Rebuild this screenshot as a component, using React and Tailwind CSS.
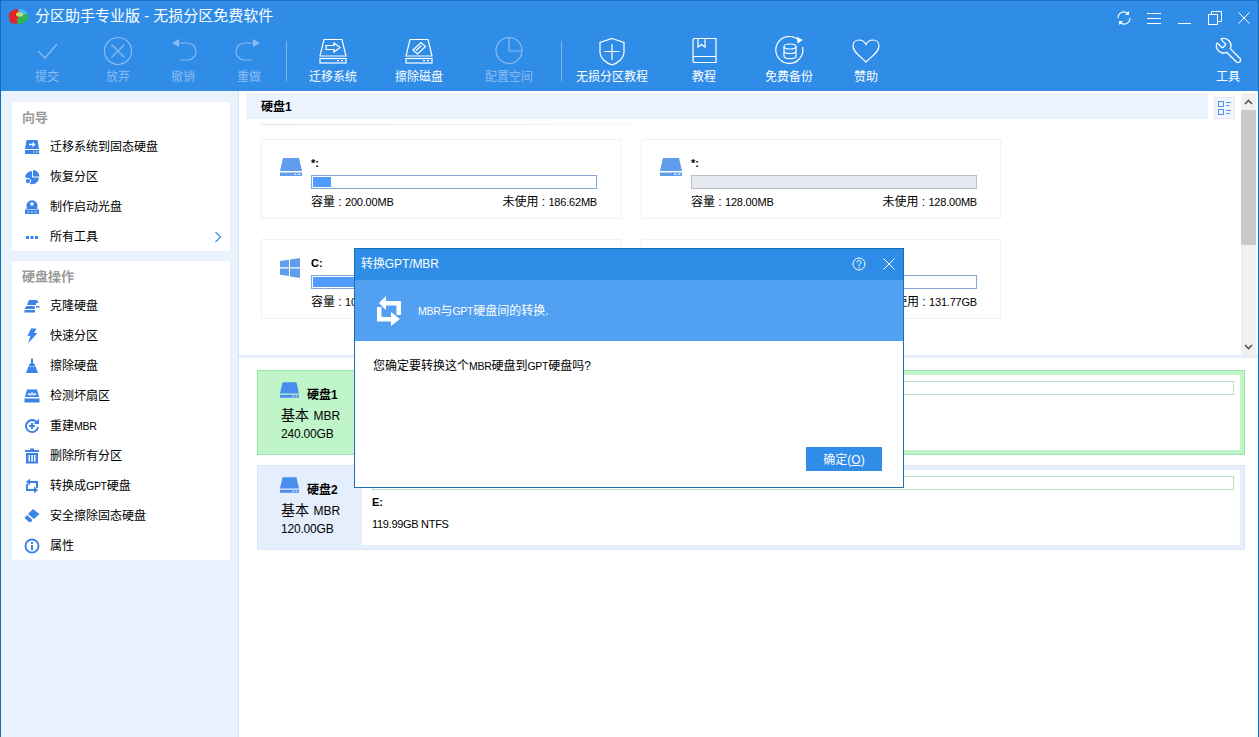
import React from 'react';
import { Wrench } from 'lucide-react';

const FONT = "font-['Liberation_Sans','Noto_Sans_CJK_SC',sans-serif]";

const ToolIcon = ({ name }) => {
  const common = { fill: 'none', stroke: 'currentColor', strokeWidth: 1.2 };
  return (
    <svg width="40" height="32" viewBox="0 0 40 32" {...common}>
      {name === 'check' && <path d="M11 15 L18 22 L30 8" />}
      {name === 'cancel' && (
        <>
          <circle cx="20" cy="15" r="13.5" />
          <path d="M13.5 8.5 L26.5 21.5 M26.5 8.5 L13.5 21.5" />
        </>
      )}
      {name === 'undo' && (
        <>
          <path d="M16 7 H24.5 a8.5 8.5 0 0 1 0 17 H17" />
          <path d="M9 7 L16 3 V11 Z" fill="currentColor" stroke="none" />
        </>
      )}
      {name === 'redo' && (
        <>
          <path d="M24 7 H15.5 a8.5 8.5 0 0 0 0 17 H23" />
          <path d="M31 7 L24 3 V11 Z" fill="currentColor" stroke="none" />
        </>
      )}
      {name === 'migrate' && (
        <>
          <path d="M11 3.5 H29 L33 20 H7 Z" />
          <rect x="7" y="22.5" width="26" height="4.5" />
          <path d="M24 24.7 h2 M28 24.7 h2" />
          <path d="M13 9.5 H21 V7 L27 11.5 L21 16 V13.5 H13 Z" />
        </>
      )}
      {name === 'erase' && (
        <>
          <path d="M11 3.5 H29 L33 20 H7 Z" />
          <rect x="7" y="22.5" width="26" height="4.5" />
          <path d="M24 24.7 h2 M28 24.7 h2" />
          <path d="M14 14 L22 6.5 L26.5 10.5 L18.5 18 Z" />
          <path d="M17 14.5 L22.5 9.5" />
        </>
      )}
      {name === 'pie' && (
        <>
          <circle cx="20" cy="14.5" r="13" />
          <path d="M20 1.5 V15 H32.5" />
        </>
      )}
      {name === 'shield' && (
        <>
          <path d="M20 2.5 L32 6.5 V16 C32 22 26 27 20 29 C14 27 8 22 8 16 V6.5 Z" />
          <path d="M20 8 V24 M12.5 15.5 H27.5" />
        </>
      )}
      {name === 'book' && (
        <>
          <path d="M11 2.5 H32 V26.5 H11 Q9 26.5 9 24.5 V4.5 Q9 2.5 11 2.5 Z" />
          <path d="M14 2.5 V11 L17.5 8.5 L21 11 V2.5" />
          <path d="M9 22 Q9.5 20.5 11 20.5 H32" />
        </>
      )}
      {name === 'backup' && (
        <>
          <path d="M30 4.5 A13.5 13.5 0 1 0 33.5 11" />
          <path d="M28 1 L34 4 L28.5 7.5 Z" fill="currentColor" stroke="none" />
          <ellipse cx="21" cy="10.5" rx="6" ry="2.5" />
          <path d="M15 10.5 V20 C15 23.5 27 23.5 27 20 V10.5 M15 15 C15 18.3 27 18.3 27 15" />
        </>
      )}
      {name === 'heart' && (
        <path d="M20 26 C14 20 7 16 7 10 C7 6 10 4 13 4 C16 4 18.5 5.5 20 8.5 C21.5 5.5 24 4 27 4 C30 4 33 6 33 10 C33 16 26 20 20 26 Z" />
      )}
    </svg>
  );
};

const tools = [
  { label: '提交', icon: 'check', w: 'w-[70px]', dim: true },
  { label: '放弃', icon: 'cancel', w: 'w-[72px]', dim: true },
  { label: '撤销', icon: 'undo', w: 'w-[58px]', dim: true },
  { label: '重做', icon: 'redo', w: 'w-[74px]', dim: true },
  { sep: 'ml-0' },
  { label: '迁移系统', icon: 'migrate', w: 'w-[92px]' },
  { label: '擦除磁盘', icon: 'erase', w: 'w-[80px]' },
  { label: '配置空间', icon: 'pie', w: 'w-[100px]', dim: true },
  { sep: 'ml-[2px]' },
  { label: '无损分区教程', icon: 'shield', w: 'w-[100px]' },
  { label: '教程', icon: 'book', w: 'w-[84px]' },
  { label: '免费备份', icon: 'backup', w: 'w-[86px]' },
  { label: '赞助', icon: 'heart', w: 'w-[68px]' },
];

const SideIcon = ({ name }) => (
  <svg width="16" height="16" viewBox="0 0 16 16" fill="#3a84e8">
    {name === 'migrate' && (
      <>
        <path d="M2.5 1 H13.5 L15 10 H1 Z" />
        <path d="M5 4.7 H8.5 V2.7 L11.5 5.5 L8.5 8.3 V6.3 H5 Z" fill="#fff" />
        <path fillRule="evenodd" d="M1 11 H15 V15 H1 Z M9 12.5 V13.5 H10.5 V12.5 Z M12 12.5 V13.5 H13.5 V12.5 Z" />
      </>
    )}
    {name === 'restore' && (
      <>
        <path d="M9 1 A7 7 0 0 1 15.5 7.5 H9 Z" />
        <path d="M8 2 V8.5 H15 A7 7 0 0 1 6 15 A7 7 0 0 0 1 8 A7 7 0 0 1 8 2 Z" />
        <circle cx="4" cy="12" r="2.6" fill="#3a84e8" stroke="#fff" strokeWidth="1" />
      </>
    )}
    {name === 'boot' && (
      <>
        <path d="M3 9 A5.5 5.5 0 1 1 13 9 L14 10 H2 Z" />
        <circle cx="8" cy="5" r="1.8" fill="#fff" />
        <path fillRule="evenodd" d="M1 10.5 H15 V15 H1 Z M3.5 12.5 V13.5 H5 V12.5 Z M7 12.5 V13.5 H8.8 V12.5 Z M10.8 12.5 V13.5 H12.5 V12.5 Z" />
      </>
    )}
    {name === 'dots' && <path d="M2 7 H5 V10 H2 Z M6.5 7 H9.5 V10 H6.5 Z M11 7 H14 V10 H11 Z" />}
    {name === 'clone' && (
      <>
        <path d="M5 2 H13 L14.5 5 H12 V7 H3 Z" />
        <path d="M2.5 8 H10.5 L11 11 H0.5 Z" />
        <path d="M0.5 12 H11 V14.5 H0.5 Z M12 8 H15.5 V9.5 H12 Z" />
      </>
    )}
    {name === 'flash' && <path d="M7 0.5 H12.5 L10 5 H13.5 L4 15.5 L6.5 8 H3.5 Z" />}
    {name === 'broom' && (
      <>
        <path d="M7 0.5 H9 V5 L11 6.5 V8 H5 V6.5 L7 5 Z" />
        <path d="M4.5 8.5 H11.5 L14 15 H2 Z" />
      </>
    )}
    {name === 'scan' && (
      <>
        <path fillRule="evenodd" d="M3 1.5 H13 L15 9 H1 Z M3 7.5 L5 4.5 L6.5 6.5 L8 3.5 L9.5 6.5 L11 4.5 L13 7.5 L11 6.5 L9.5 8 L8 6 L6.5 8 L5 6.5 Z" />
        <path d="M0.5 10.5 H15.5 V14.5 H0.5 Z" />
      </>
    )}
    {name === 'rebuild' && (
      <>
        <path d="M13 3 A7 7 0 1 0 15 9 H13 A5 5 0 1 1 11.5 4.5 L9.5 6 H15 V0.5 Z" />
        <path d="M5 7 H7 V5 H9 V7 H11 V9 H9 V11 H7 V9 H5 Z" />
      </>
    )}
    {name === 'trash' && (
      <path fillRule="evenodd" d="M6 0.5 H10 V2 H15 V4 H1 V2 H6 Z M2 5 H14 V15.5 H2 Z M4.5 7 V13.5 H6 V7 Z M7.3 7 V13.5 H8.8 V7 Z M10 7 V13.5 H11.5 V7 Z" />
    )}
    {name === 'convert' && (
      <path d="M2 4 L6 0.5 V3 H14 V10 H12 V5 H6 V7.5 Z M2 6 H4 V11 H10 V8.5 L14 12 L10 15.5 V13 H2 Z" />
    )}
    {name === 'eraser' && (
      <>
        <path d="M9 1 L15.5 6 L10 11 L4 6 Z" />
        <path d="M3 7 L8.5 12 L7 14 H5 L0.5 10 Z" />
      </>
    )}
    {name === 'info' && (
      <path fillRule="evenodd" d="M8 0.5 A7.5 7.5 0 1 1 8 15.5 A7.5 7.5 0 1 1 8 0.5 Z M8 2.5 A5.5 5.5 0 1 0 8 13.5 A5.5 5.5 0 1 0 8 2.5 Z M7 4 H9 V6 H7 Z M7 7 H9 V12 H7 Z" />
    )}
  </svg>
);

// narrow latin run inside chinese labels
const Lat = ({ children }) => <span className="text-[10.5px] tracking-[-0.3px]">{children}</span>;

const wizard = [
  { icon: 'migrate', label: '迁移系统到固态硬盘' },
  { icon: 'restore', label: '恢复分区' },
  { icon: 'boot', label: '制作启动光盘' },
  { icon: 'dots', label: '所有工具', arrow: true },
];

const diskOps = [
  { icon: 'clone', label: '克隆硬盘' },
  { icon: 'flash', label: '快速分区' },
  { icon: 'broom', label: '擦除硬盘' },
  { icon: 'scan', label: '检测坏扇区' },
  { icon: 'rebuild', label: <>重建<Lat>MBR</Lat></>, key: 'mbr' },
  { icon: 'trash', label: '删除所有分区' },
  { icon: 'convert', label: <>转换成<Lat>GPT</Lat>硬盘</>, key: 'gpt' },
  { icon: 'eraser', label: '安全擦除固态硬盘' },
  { icon: 'info', label: '属性' },
];

const SideCard = ({ title, items }) => (
  <div className="bg-white">
    <div className="h-[29px] pl-[10px] pt-[2px] flex items-center text-[13px] font-bold text-[#9a9a9a]">{title}</div>
    {items.map((item) => (
      <div key={item.key || item.label} className="h-[30px] pt-[2px] flex items-center pl-[12px] pr-[8px] text-xs text-black">
        <span className="w-[26px] flex"><SideIcon name={item.icon} /></span>
        <span>{item.label}</span>
        {item.arrow && (
          <svg className="ml-auto" width="8" height="12" viewBox="0 0 8 12" fill="none" stroke="#3a8ae8" strokeWidth="1.2">
            <path d="M1.5 1 L6.5 6 L1.5 11" />
          </svg>
        )}
      </div>
    ))}
  </div>
);

const DiskGlyph = ({ w = 22, color = '#619ded' }) => (
  <svg width={w} height={Math.round((w * 18) / 22)} viewBox="0 0 22 18" fill={color}>
    <path d="M3 0 H19 L22 13 H0 Z" />
    <path fillRule="evenodd" d="M0 14.5 H22 V18 H0 Z M14 15.7 V16.8 H16.5 V15.7 Z M18 15.7 V16.8 H20.5 V15.7 Z" />
  </svg>
);

const WinGlyph = () => (
  <svg width="20" height="20" viewBox="0 0 20 20" fill="#619ded">
    <path d="M0 3 L9 1.7 V9.3 H0 Z M10 1.5 L20 0 V9.3 H10 Z M0 10.5 H9 V18 L0 16.8 Z M10 10.5 H20 V20 L10 18.4 Z" />
  </svg>
);

const partitions = [
  { name: '*:', total: '200.00MB', free: '186.62MB', fill: 'w-[18px]', bar: 'border-[#86a8d8]', icon: 'disk' },
  { name: '*:', total: '128.00MB', free: '128.00MB', bar: 'border-[#bcc0ca]', bg: 'bg-[#e8eaf2]', icon: 'disk' },
  { name: 'C:', total: '107.79GB', fill: 'w-[120px]', bar: 'border-[#86a8d8]', icon: 'win' },
  { name: 'D:', total: '132.00GB', free: '131.77GB', fill: 'w-[4px]', bar: 'border-[#86a8d8]', icon: 'disk' },
];

const PartitionCard = ({ p }) => (
  <div className="w-[360px] h-[80px] border border-[#f0f2f5] flex pl-[18px] pr-[23px] pt-[14px]">
    <div className="w-[31px] pt-[4px] shrink-0">
      {p.icon === 'win' ? <WinGlyph /> : <DiskGlyph />}
    </div>
    <div className="flex-1">
      <div className="h-[18px] mb-[3px] flex items-center text-[11px] font-bold text-black">{p.name}</div>
      <div className={`h-[14px] border p-[1px] ${p.bar} ${p.bg || 'bg-white'}`}>
        {p.fill && <div className={`h-full bg-[#4f9bfb] ${p.fill}`} />}
      </div>
      <div className="flex justify-between mt-[5px] text-xs leading-[16px] text-black">
        <span>容量 : <span className="text-[11px] tracking-[-0.2px]">{p.total}</span></span>
        {p.free && <span>未使用 : <span className="text-[11px] tracking-[-0.2px]">{p.free}</span></span>}
      </div>
    </div>
  </div>
);

const DiskRow = ({ title, size, selected, children }) => (
  <div className={`h-[85px] flex border ${selected ? 'bg-[#bff5c8] border-[#9fe3ac]' : 'bg-[#e5eefc] border-[#dce6f5]'}`}>
    <div className="w-[104px] shrink-0 pl-[22px] pt-[10px]">
      <div className="flex items-end gap-[8px] h-[19px]">
        <span className="mb-[2px] flex"><DiskGlyph w={19} color="#4a8dec" /></span>
        <span className="text-xs font-bold text-black leading-[14px] -mb-[2px]">{title}</span>
      </div>
      <div className="ml-px text-black leading-[18px] mt-[5px]">
        <span className="text-sm">基本</span> <span className="text-xs">MBR</span>
      </div>
      <div className="ml-px text-xs tracking-[-0.2px] text-black mt-[1px]">{size}</div>
    </div>
    <div className="flex-1 bg-white my-[4px] mr-[4px] pl-[10px] pr-[6px] pt-[6px]">
      {children}
    </div>
  </div>
);

const PartBar = () => <div className="h-[14px] border border-[#b5e3bf] bg-white" />;

const Dialog = () => (
  <div className="absolute left-[353px] top-[248px] w-[550px] h-[240px] bg-white border border-[#1a6db5] flex flex-col">
    <div className="h-[31px] pb-[1px] bg-[#2e8de6] flex items-center pl-[6px] text-white">
      <span className="text-xs tracking-[-0.1px]">转换GPT/MBR</span>
      <svg className="ml-auto" width="14" height="14" viewBox="0 0 14 14" fill="none" stroke="#fff" strokeWidth="1">
        <circle cx="7" cy="7" r="6" />
        <path d="M5 5.5 a2 2 0 1 1 3 1.7 c-.8 .5 -1 .9 -1 1.8 M7 10 v1.2" />
      </svg>
      <svg className="ml-[17px] mr-[8px]" width="12" height="12" viewBox="0 0 12 12" fill="none" stroke="#fff" strokeWidth="1">
        <path d="M0.5 0.5 L11.5 11.5 M11.5 0.5 L0.5 11.5" />
      </svg>
    </div>
    <div className="h-[61px] bg-[#52a0f2] flex items-center pl-[22px] text-white">
      <svg width="24" height="30" viewBox="0 0 24 30" fill="#fff">
        <path d="M2 7 L9 0 V5 H24 V19 H19.5 V9.5 H9 V14 Z" />
        <path d="M0 11 H4.5 V21 H14 V16 L23 23 L14 30 V25.5 H0 Z" />
      </svg>
      <span className="ml-[17px] text-xs"><Lat>MBR</Lat>与<Lat>GPT</Lat>硬盘间的转换.</span>
    </div>
    <div className="flex-1 flex flex-col pl-[18px] pr-[21px] pt-[17px] pb-[16px]">
      <div className="text-xs leading-[16px] text-black">您确定要转换这个<Lat>MBR</Lat>硬盘到<Lat>GPT</Lat>硬盘吗?</div>
      <button className="mt-auto self-end w-[76px] h-[24px] pt-[1px] bg-[#2f8de8] text-xs text-white">
        确定(<span className="underline">O</span>)
      </button>
    </div>
  </div>
);

export default function App() {
  return (
    <div className={`${FONT} relative w-full h-screen overflow-hidden bg-white border-x border-[#0f6cb8] flex flex-col`}>
      {/* title + toolbar */}
      <div className="h-[91px] shrink-0 bg-[#2f8de8] border-t border-[#1873c7] text-white">
        <div className="h-[31px] mb-[4px] flex items-center pl-[7px]">
          <svg width="21" height="17" viewBox="0 0 21 17">
            <path d="M1 6 C2 3 6 1 10 1 L11 8 L9 16 L3 15 C1 12 0.5 9 1 6 Z" fill="#e0252c" />
            <path d="M10 1 C14 0.5 18 2 20 6 L12 8 Z" fill="#4fb4ee" />
            <path d="M12 8 L20 6 C21 10 19 13 17 14 L10 17 L9 12 Z" fill="#2fb54e" />
            <ellipse cx="11.5" cy="6.5" rx="3.5" ry="2.2" fill="#b6e86a" />
          </svg>
          <span className="ml-[6px] text-[15px]">分区助手专业版 - 无损分区免费软件</span>
          <div className="ml-auto flex items-center mt-[2px] mr-[8px]">
            <svg width="16" height="16" viewBox="0 0 16 16" fill="none" stroke="#fff" strokeWidth="1.1">
              <path d="M2 8 A6 6 0 0 1 12 3.5 M14 8 A6 6 0 0 1 4 12.5" />
              <path d="M13 1 V5 H9 Z M3 15 V11 H7 Z" fill="#fff" stroke="none" />
            </svg>
            <svg className="ml-[15px]" width="14" height="14" viewBox="0 0 14 14" stroke="#fff" strokeWidth="1">
              <path d="M0 2.5 H14 M0 7.5 H14 M0 12.5 H14" />
            </svg>
            <svg className="ml-[17px]" width="14" height="14" viewBox="0 0 14 14" stroke="#fff" strokeWidth="1">
              <path d="M0 12.5 H13" />
            </svg>
            <svg className="ml-[16px]" width="14" height="14" viewBox="0 0 14 14" fill="none" stroke="#fff" strokeWidth="1">
              <rect x="0.5" y="3.5" width="9" height="10" />
              <path d="M3.5 3.5 V0.5 H13.5 V10.5 H9.5" />
            </svg>
            <svg className="ml-[16px]" width="12" height="12" viewBox="0 0 12 12" stroke="#fff" strokeWidth="1">
              <path d="M0.5 0.5 L11.5 11.5 M11.5 0.5 L0.5 11.5" />
            </svg>
          </div>
        </div>
        <div className="flex items-start pl-[11px]">
          {tools.map((t, i) =>
            t.sep ? (
              <div key={i} className={`w-px h-[40px] mt-[5px] bg-[#7fb6ee] shrink-0 ${t.sep}`} />
            ) : (
              <div key={t.label} className={`${t.w} shrink-0 flex flex-col items-center ${t.dim ? 'text-[#8cbcf1]' : 'text-white'}`}>
                <ToolIcon name={t.icon} />
                <span className="text-xs leading-[16px] mt-[1px]">{t.label}</span>
              </div>
            )
          )}
          <div className="ml-auto w-[60px] flex flex-col items-center">
            <div className="h-[32px]">
              <Wrench className="-scale-x-100" size={29} strokeWidth={1.1} />
            </div>
            <span className="text-xs leading-[16px] mt-[1px]">工具</span>
          </div>
        </div>
      </div>

      <div className="flex-1 flex min-h-0">
        {/* sidebar */}
        <div className="w-[238px] shrink-0 bg-[#eaf2fd] border-r border-[#d8e2ee] pl-[11px] pr-[8px] pt-[11px] flex flex-col gap-[10px]">
          <SideCard title="向导" items={wizard} />
          <SideCard title="硬盘操作" items={diskOps} />
        </div>

        {/* main */}
        <div className="flex-1 flex flex-col min-w-0">
          <div className="h-[264px] shrink-0 flex">
            <div className="flex-1 pt-[2px] min-w-0">
              <div className="flex ml-[7px]">
                <div className="w-[962px] h-[26px] pt-[2px] bg-[#ebf4fe] pl-[15px] flex items-center text-xs font-bold text-black">硬盘1</div>
                <div className="ml-[6px] mt-[4px] w-[21px] h-[22px] bg-[#f1f5fb] border border-[#e2e8f2] flex items-center justify-center">
                  <svg width="14" height="15" viewBox="0 0 14 15" fill="none" stroke="#4c95ee">
                    <rect x="0.5" y="0.5" width="5" height="5" />
                    <rect x="0.5" y="8.5" width="5" height="5" />
                    <path d="M8 1.5 H13 M8 4.5 H11.5 M8 9.5 H13 M8 12.5 H11.5" />
                  </svg>
                </div>
              </div>
              <div className="ml-[22px] mt-[5px] w-[490px] h-px bg-gradient-to-r from-[#dfe3e8] to-white" />
              <div className="ml-[22px] mt-[14px] grid grid-cols-[360px_360px] gap-x-[20px] gap-y-[20px]">
                {partitions.map((p, i) => <PartitionCard key={i} p={p} />)}
              </div>
            </div>
            <div className="w-[15px] mr-[2px] mt-[2px] bg-[#f0f0f0] flex flex-col shrink-0">
              <div className="h-[17px] flex items-center justify-center">
                <svg width="9" height="6" viewBox="0 0 9 6" fill="none" stroke="#555" strokeWidth="1.6"><path d="M1 5 L4.5 1.5 L8 5" /></svg>
              </div>
              <div className="h-[135px] bg-[#c9c9c9]" />
              <div className="mt-auto h-[17px] flex items-center justify-center">
                <svg width="9" height="6" viewBox="0 0 9 6" fill="none" stroke="#555" strokeWidth="1.6"><path d="M1 1 L4.5 4.5 L8 1" /></svg>
              </div>
            </div>
          </div>
          <div className="h-[3px] shrink-0 bg-[#e8eef5]" />
          <div className="pl-[18px] pr-[13px] pt-[12px] flex flex-col gap-[10px]">
            <DiskRow title="硬盘1" size="240.00GB" selected>
              <PartBar />
              <div className="mt-[20px] text-[11px] tracking-[-0.3px] text-right pr-[330px] text-black">239.67GB NTFS</div>
            </DiskRow>
            <DiskRow title="硬盘2" size="120.00GB">
              <PartBar />
              <div className="mt-[5px] text-[11px] font-bold text-black leading-[14px]">E:</div>
              <div className="mt-[8px] text-[11px] tracking-[-0.3px] text-black leading-[14px]">119.99GB NTFS</div>
            </DiskRow>
          </div>
        </div>
      </div>

      <Dialog />
    </div>
  );
}
